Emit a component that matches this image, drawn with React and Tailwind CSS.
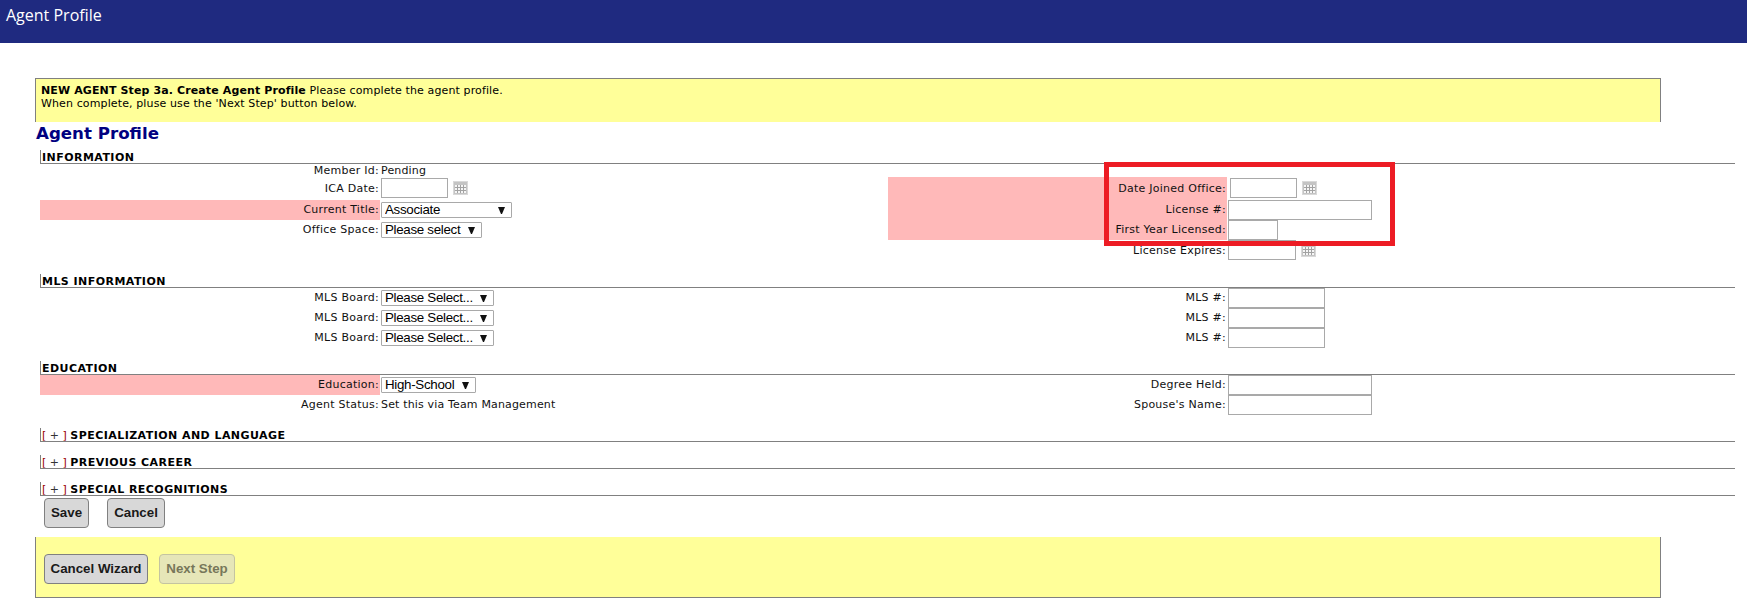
import { useState } from 'react';

const labelFont = "font-['DejaVu_Sans',Verdana,sans-serif]";

function CalendarIcon() {
  return (
    <svg width="15" height="14" viewBox="0 0 15 14" className="ml-[5px] shrink-0">
      <rect x="0" y="0" width="15" height="14" fill="#d9d9d9" />
      <rect x="1" y="1" width="13" height="12" fill="#c4c4c4" />
      <rect x="2" y="4" width="11" height="8" fill="#f6f6f6" />
      <path d="M2 6.5h11M2 9.5h11M4.5 4v8M7.5 4v8M10.5 4v8" stroke="#a2a2a2" strokeWidth="1" fill="none" />
    </svg>
  );
}

function TextBox({ width }) {
  return <input type="text" style={{ width }} className="h-[20px] border border-[#a9a9a9] bg-white outline-none" />;
}

function Dropdown({ value, options, width }) {
  const [current, setCurrent] = useState(value);
  return (
    <div className="relative h-[16px]" style={{ width }}>
      <select
        value={current}
        onChange={(e) => setCurrent(e.target.value)}
        className="h-[16px] w-full appearance-none rounded-[1px] border border-[#a9a9a9] bg-white pl-[3px] font-['Liberation_Sans',Arial,sans-serif] text-[13.33px] leading-[14px] tracking-[-0.3px] text-black outline-none"
      >
        {options.map((o) => <option key={o}>{o}</option>)}
      </select>
      <svg width="7" height="7" viewBox="0 0 7 7" className="pointer-events-none absolute right-[7px] top-[5px]">
        <polygon points="0,0 7,0 4,7 3,7" fill="#111" />
      </svg>
    </div>
  );
}

function Label({ children, pink }) {
  return (
    <div className={`flex h-full items-center justify-end pr-[1px] pt-[1px] tracking-[0.25px] ${pink ? 'bg-[#ffb9b9]' : ''}`}>{children}</div>
  );
}

function Row({ height = 'h-[20px]', left, leftValue, leftPink, right, rightValue, rightPink }) {
  return (
    <div className={`grid grid-cols-[340px_508px_339px_1fr] ${height}`}>
      <Label pink={leftPink}>{left}</Label>
      <div className="flex items-center pl-[1px] tracking-[0.16px]">{leftValue}</div>
      <Label pink={rightPink}>{right}</Label>
      <div className="flex items-center pl-[1px]">{rightValue}</div>
    </div>
  );
}

function SectionHead({ children, toggle, className = '' }) {
  return (
    <div className={`mr-[12px] h-[14px] border-b border-l border-[#808080] pl-[1px] text-[11px] leading-[15px] font-bold text-black ${className}`}>
      {toggle && <span className="font-normal text-[#990000]">[ <span className="text-[#333]">+</span> ] </span>}
      <span className="tracking-[0.45px]">{children}</span>
    </div>
  );
}

function Btn({ children, width, disabled }) {
  return (
    <button
      type="button"
      disabled={disabled}
      style={{ width }}
      className={`h-[30px] rounded-[4px] border font-['Liberation_Sans',Arial,sans-serif] text-[13.33px] font-bold ${disabled ? 'border-[#c4c4a0] bg-[#e6e6b8] text-[#77775a]' : 'border-[#808080] bg-[#d8d8d8] text-[#1a1a1a]'}`}
    >
      {children}
    </button>
  );
}

const mlsBoards = ['Please Select...'];

export default function App() {
  return (
    <div className={`min-h-[602px] bg-white text-[11px] text-[#111] ${labelFont}`}>
      <div className="h-[43px] bg-[#1f2a80] pl-[6px] pt-[5px] font-['Open_Sans',sans-serif] text-[16px] leading-[20px] text-white">Agent Profile</div>

      <div className="ml-[35px] mr-[86px] mt-[35px] h-[44px] border-x border-t border-[#808080] bg-[#ffff99] pl-[5px] pt-[5px] leading-[13px] tracking-[0.12px] text-black">
        <b>NEW AGENT Step 3a. Create Agent Profile</b> Please complete the agent profile.
        <br />
        When complete, pluse use the 'Next Step' button below.
      </div>

      <h1 className="ml-[36px] h-[28px] pt-[1px] text-[16.67px] leading-[22px] font-bold text-[#000080]">Agent Profile</h1>

      <div className="ml-[40px]">
        <SectionHead>INFORMATION</SectionHead>
        <Row height="h-[13px] leading-[13px] -mt-[1px] mb-[1px]" left="Member Id:" leftValue="Pending" />
        <Row
          height="h-[23px]"
          left="ICA Date:"
          leftValue={<div className="mb-[1px] flex items-center"><TextBox width="67px" /><CalendarIcon /></div>}
          right="Date Joined Office:"
          rightPink
          rightValue={<div className="mb-[1px] ml-[2px] flex items-center"><TextBox width="67px" /><CalendarIcon /></div>}
        />
        <Row
          left="Current Title:"
          leftPink
          leftValue={<Dropdown value="Associate" options={['Associate']} width="131px" />}
          right="License #:"
          rightPink
          rightValue={<TextBox width="144px" />}
        />
        <Row
          left="Office Space:"
          leftValue={<Dropdown value="Please select" options={['Please select']} width="101px" />}
          right="First Year Licensed:"
          rightPink
          rightValue={<TextBox width="50px" />}
        />
        <Row right={<span className="mt-[2px]">License Expires:</span>} rightValue={<><TextBox width="68px" /><CalendarIcon /></>} />

        <SectionHead className="mt-[14px]">MLS INFORMATION</SectionHead>
        {[0, 1, 2].map((i) => (
          <Row
            key={i}
            left="MLS Board:"
            leftValue={<Dropdown value={mlsBoards[0]} options={mlsBoards} width="113px" />}
            right="MLS #:"
            rightValue={<TextBox width="97px" />}
          />
        ))}

        <SectionHead className="mt-[13px]">EDUCATION</SectionHead>
        <Row
          left="Education:"
          leftPink
          leftValue={<Dropdown value="High-School" options={['High-School']} width="95px" />}
          right="Degree Held:"
          rightValue={<TextBox width="144px" />}
        />
        <Row left="Agent Status:" leftValue="Set this via Team Management" right="Spouse's Name:" rightValue={<TextBox width="144px" />} />

        <SectionHead toggle className="mt-[13px]">SPECIALIZATION AND LANGUAGE</SectionHead>
        <SectionHead toggle className="mt-[13px]">PREVIOUS CAREER</SectionHead>
        <SectionHead toggle className="mt-[13px]">SPECIAL RECOGNITIONS</SectionHead>
      </div>

      <div className="ml-[44px] mt-[2px] flex h-[39px] items-start gap-[18px]">
        <Btn width="45px">Save</Btn>
        <Btn width="58px">Cancel</Btn>
      </div>

      <div className="ml-[35px] mr-[86px] flex h-[61px] items-start gap-[11px] border-x border-b border-[#808080] bg-[#ffff99] pl-[8px] pt-[17px]">
        <Btn width="104px">Cancel Wizard</Btn>
        <Btn width="76px" disabled>Next Step</Btn>
      </div>

      {/* red highlight drawn over the screenshot */}
      <div className="pointer-events-none absolute left-[1104px] top-[162px] h-[84px] w-[291px] border-[5px] border-[#ed1c24]" />
    </div>
  );
}
